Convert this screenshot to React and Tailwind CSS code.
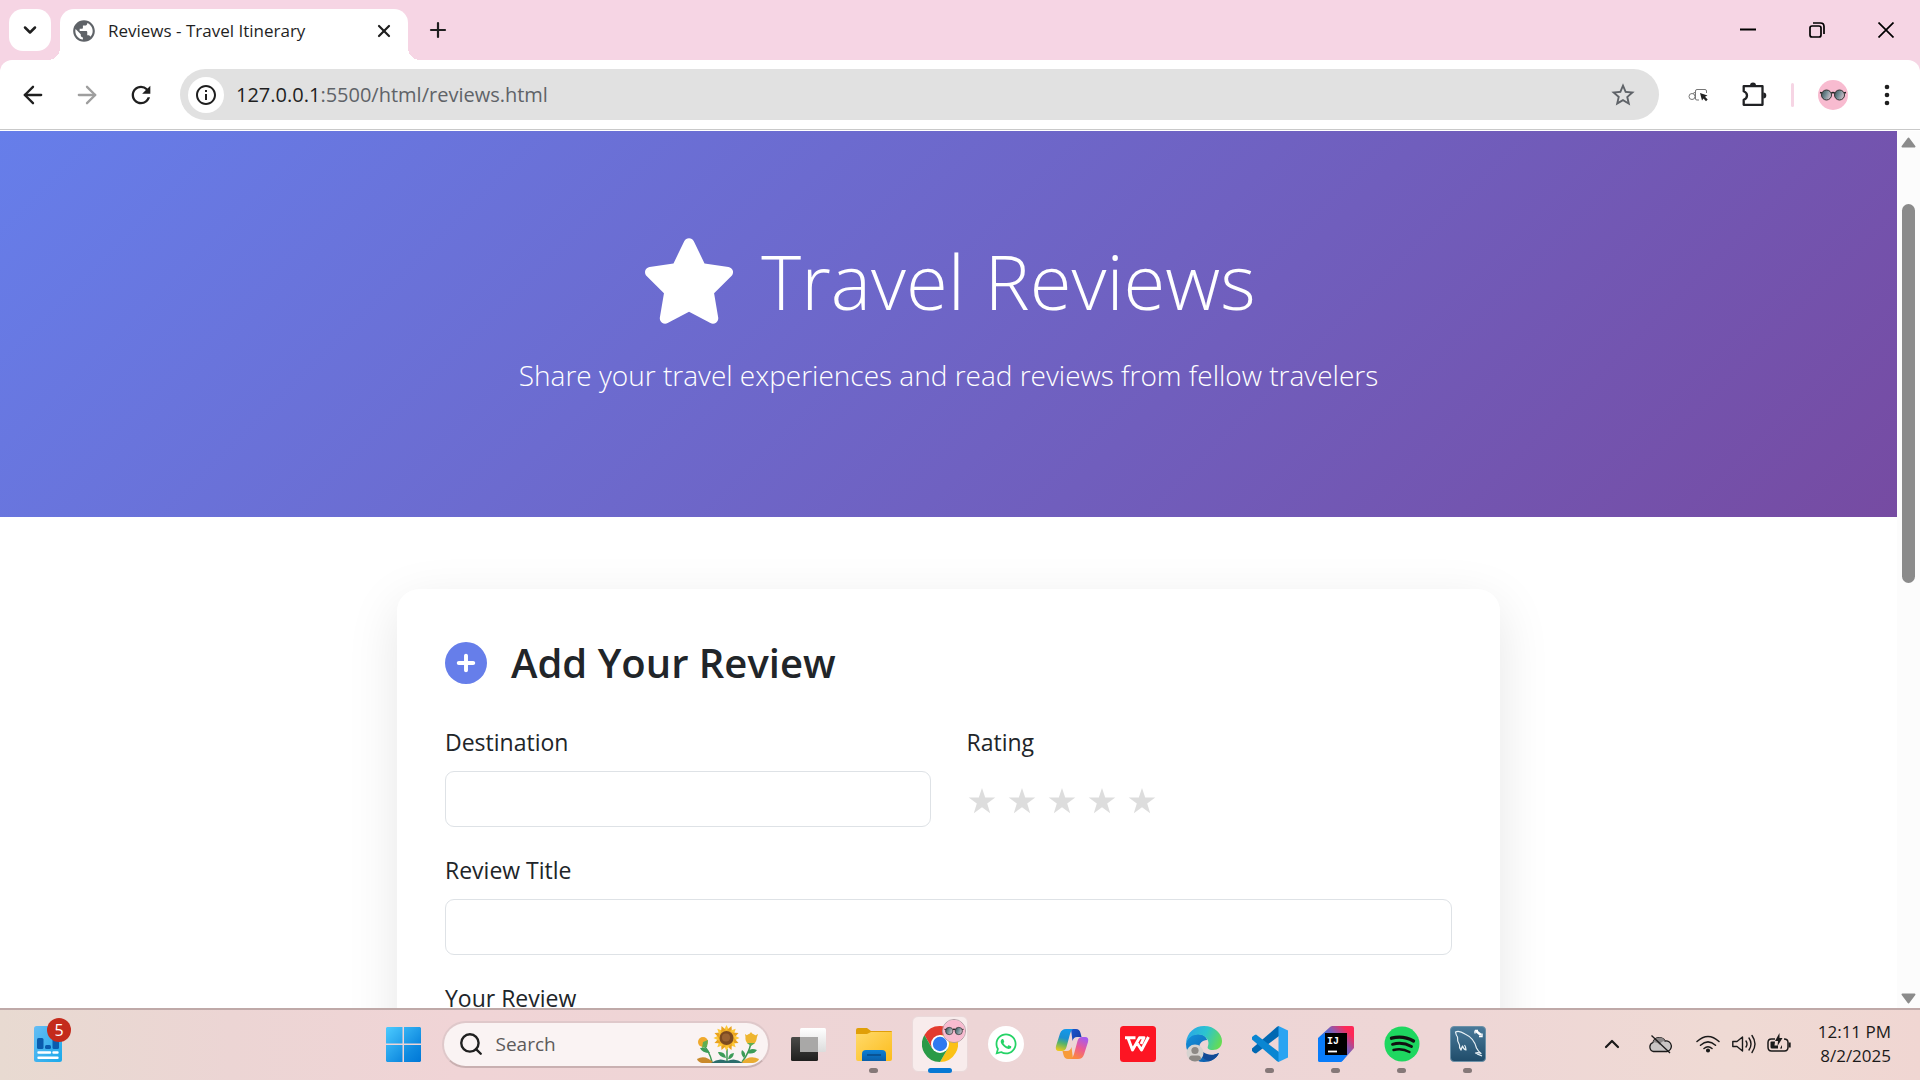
import React from "react";
import { ArrowLeft, ArrowRight, ChevronDown, ChevronUp, Plus, X, Search } from "lucide-react";
import { MdRefresh, MdInfoOutline, MdStarBorder, MdPublic } from "react-icons/md";
import { FaStar, FaCirclePlus, FaWhatsapp } from "react-icons/fa6";

function RoundGlasses({ className }) {
  return (
    <svg viewBox="0 0 30 30" className={className} aria-hidden="true">
      <defs>
        <linearGradient id="lens" x1="0" y1="0" x2="1" y2="0.4">
          <stop offset="0" stopColor="#3c4a50" />
          <stop offset="0.5" stopColor="#6f8a92" />
          <stop offset="1" stopColor="#c9bcc6" />
        </linearGradient>
      </defs>
      <circle cx="15" cy="15" r="15" fill="#f8bbd0" />
      <path d="M2 12.5 4 13M28 12.5 26 13M13 13.5Q15 11.5 17 13.5" stroke="#222" strokeWidth="1.5" fill="none" />
      <circle cx="8.5" cy="15" r="5" fill="url(#lens)" stroke="#333" strokeWidth="1" />
      <circle cx="21.5" cy="15" r="5" fill="url(#lens)" stroke="#333" strokeWidth="1" />
    </svg>
  );
}

function TabStrip() {
  return (
    <header className="flex h-[60px] shrink-0 items-stretch bg-[#f6d5e4]">
      <button aria-label="Search tabs" className="ml-[9px] mt-[9px] flex size-[42px] items-center justify-center rounded-[14px] bg-white">
        <ChevronDown className="size-5 text-[#1f1f1f]" strokeWidth={3} />
      </button>
      <div className="relative ml-[9px] mt-[9px] flex w-[348px] items-center rounded-t-[14px] bg-white pb-2 pl-[11px] pr-3">
        <span className="absolute -left-3 bottom-0 size-3 bg-[radial-gradient(circle_at_0_0,#f6d5e4_12px,#fff_12px)]" />
        <span className="absolute -right-3 bottom-0 size-3 bg-[radial-gradient(circle_at_100%_0,#f6d5e4_12px,#fff_12px)]" />
        <MdPublic className="size-[26px] text-[#5f6368]" />
        <span className="ml-[11px] flex-1 whitespace-nowrap text-[17px] leading-6 text-[#1f1f1f]">Reviews - Travel Itinerary</span>
        <button aria-label="Close tab" className="flex size-6 items-center justify-center">
          <X className="size-5 text-[#1f1f1f]" strokeWidth={2.6} />
        </button>
      </div>
      <button aria-label="New tab" className="ml-[18px] flex w-6 items-center justify-center">
        <Plus className="size-6 text-[#1f1f1f]" strokeWidth={2.2} />
      </button>
      <div className="ml-auto flex">
        <button aria-label="Minimize" className="flex w-[69px] items-center justify-center">
          <svg viewBox="0 0 16 16" className="size-4"><path d="M0 7.5H16" stroke="#000" strokeWidth="2" /></svg>
        </button>
        <button aria-label="Restore" className="flex w-[69px] items-center justify-center">
          <svg viewBox="0 0 16 16" className="size-4" fill="none" stroke="#000" strokeWidth="1.7">
            <rect x="1" y="4" width="11" height="11" rx="2" />
            <path d="M4 1H11.5Q15 1 15 4.500V12" />
          </svg>
        </button>
        <button aria-label="Close window" className="flex w-[69px] items-center justify-center">
          <svg viewBox="0 0 16 16" className="size-4"><path d="M.5.5 15.500 15.500M15.500.5.5 15.500" stroke="#000" strokeWidth="1.700" /></svg>
        </button>
      </div>
    </header>
  );
}

function Toolbar() {
  const nav = "flex size-[42px] items-center justify-center";
  return (
    <div className="shrink-0 bg-[#f6d5e4]">
      <nav className="flex h-[70px] items-center rounded-t-xl border-b border-[#c9c9c9] bg-white px-3 text-[#1f1f1f]">
        <div className="flex gap-3">
          <button aria-label="Back" className={nav}><ArrowLeft className="size-7" /></button>
          <button aria-label="Forward" className={nav}><ArrowRight className="size-7 text-[#9e9e9e]" /></button>
          <button aria-label="Reload" className={nav}><MdRefresh className="size-7" /></button>
        </div>
        <div className="ml-[18px] flex h-[51px] flex-1 items-center rounded-full bg-[#e1e1e1] pl-2 pr-[22px]">
          <button aria-label="Site information" className="flex size-9 items-center justify-center rounded-full bg-white">
            <MdInfoOutline className="size-6" />
          </button>
          <a href="#reviews" className="ml-3 flex-1 text-xl text-[#5f6368]">
            <span className="text-[#1f1f1f]">127.0.0.1</span>:5500/html/reviews.html
          </a>
          <button aria-label="Bookmark this tab"><MdStarBorder className="size-7 text-[#5f6368]" /></button>
        </div>
        <button aria-label="Element picker" className="ml-[18px] flex size-[42px] items-center justify-center">
          <svg viewBox="0 0 20 14" className="h-[14px] w-5" fill="none" stroke="#777" strokeWidth="1">
            <circle cx="4" cy="8.500" r="3" />
            <path d="M5 5.500 7.500 4M7.500 2.500V11Q7.500 12 9 12H11M7.500 3Q7.500 1.500 9 1.500H17Q18.500 1.500 18.500 3V5" />
            <path d="M12 5 19.500 7.500 17 8.700 19.700 11.500 18 13.200 15.500 10.500 14 12.500Z" fill="#222" stroke="none" />
          </svg>
        </button>
        <button aria-label="Extensions" className="ml-[14px] flex size-[42px] items-center justify-center">
          <svg viewBox="0 0 25 25" className="size-[25px]">
            <path d="M2.500 4.200H20.500V22.800H1.700V17.800Q5 16.500 5 13.500T1.700 9.200V4.200Z" fill="none" stroke="#202124" strokeWidth="2.300" strokeLinejoin="round" />
            <path d="M8 3.500a3 3 0 0 1 6 0ZM21.300 10.500a3 3 0 0 1 0 6Z" fill="#202124" />
          </svg>
        </button>
        <span className="ml-4 h-6 w-[3px] rounded-full bg-[#f6d5e4]" />
        <button aria-label="Profile" className="ml-[18px] flex size-[42px] items-center justify-center">
          <RoundGlasses className="size-[30px]" />
        </button>
        <button aria-label="Menu" className="ml-3 flex size-[42px] items-center justify-center">
          <svg viewBox="0 0 6 22" className="h-[22px] w-[6px]" fill="#1f1f1f">
            <circle cx="3" cy="3" r="2.300" /><circle cx="3" cy="11" r="2.300" /><circle cx="3" cy="19" r="2.300" />
          </svg>
        </button>
      </nav>
    </div>
  );
}

const field = "h-14 w-full rounded-[9px] border border-[#dee2e6] bg-white px-4 text-2xl";
const label = "mb-[10px] block text-[23px] leading-[38px] text-[#212529]";

function ReviewPage() {
  return (
    <div className="flex-1 overflow-hidden bg-white">
      <section className="flex flex-col items-center bg-[linear-gradient(135deg,#667eea_0%,#764ba2_100%)] pb-[119px] pt-[100px] text-white">
        <h1 className="flex items-center gap-6 text-[76px] font-light leading-[100px]">
          <FaStar className="size-24" />
          Travel Reviews
        </h1>
        <p className="mt-[22px] text-[28px] font-light leading-[45px]">
          Share your travel experiences and read reviews from fellow travelers
        </p>
      </section>
      <form className="mx-auto mt-[72px] w-full max-w-[1103px] rounded-[22px] bg-white p-12 shadow-[0_15px_52px_rgba(0,0,0,0.1)]">
        <h2 className="mb-[34px] flex items-center gap-6 text-[40px] font-semibold leading-[52px] text-[#212529]">
          <FaCirclePlus className="size-[42px] text-[#667eea]" />
          Add Your Review
        </h2>
        <div className="grid grid-cols-2 gap-x-9">
          <div className="mb-6">
            <label htmlFor="destination" className={label}>Destination</label>
            <input id="destination" type="text" className={field} />
          </div>
          <fieldset>
            <legend className={label}>Rating</legend>
            <div className="flex h-14 items-center gap-[10px] pt-1">
              {[1, 2, 3, 4, 5].map((n) => (
                <label key={n} className="relative block w-[30px]">
                  <input type="radio" name="rating" value={n} aria-label={`${n} stars`} className="absolute inset-0 size-full cursor-pointer opacity-0" />
                  <svg viewBox="0 0 30 30" className="size-[30px]" fill="#ddd" aria-hidden="true">
                    <path d="M15 2 18.200 11.600H28.300L20.200 17.600 23.200 27.200 15 21.300 6.800 27.200 9.800 17.600 1.700 11.600H11.800Z" />
                  </svg>
                </label>
              ))}
            </div>
          </fieldset>
        </div>
        <div className="mb-6">
          <label htmlFor="title" className={label}>Review Title</label>
          <input id="title" type="text" className={field} />
        </div>
        <div>
          <label htmlFor="review" className={label}>Your Review</label>
          <textarea id="review" rows={4} className="w-full rounded-[9px] border border-[#dee2e6] p-4 text-2xl" />
        </div>
      </form>
    </div>
  );
}

function Scrollbar() {
  return (
    <div className="flex w-[23px] shrink-0 flex-col items-center bg-[#fcfcfc] pb-1 pt-[6px]">
      <svg viewBox="0 0 15 11" className="h-[11px] w-[15px]"><path d="M7.500 1.500 13.500 9.500H1.500Z" fill="#8b8b8b" stroke="#8b8b8b" strokeWidth="2" strokeLinejoin="round" /></svg>
      <div className="flex w-[13px] flex-1 flex-col pt-14">
        <div className="h-[48%] rounded-full bg-[#8b8b8b]" />
      </div>
      <svg viewBox="0 0 15 11" className="h-[11px] w-[15px]"><path d="M7.500 9.500 13.500 1.500H1.500Z" fill="#8b8b8b" stroke="#8b8b8b" strokeWidth="2" strokeLinejoin="round" /></svg>
    </div>
  );
}

const icon = "size-9";

function TaskViewIcon() {
  return (
    <svg viewBox="0 0 36 36" className={icon}>
      <defs>
        <linearGradient id="tvd" x1="0" y1="0" x2="0" y2="1"><stop offset="0" stopColor="#4a4a48" /><stop offset="1" stopColor="#1f1f1e" /></linearGradient>
        <linearGradient id="tvl" x1="0" y1="0" x2="0" y2="1"><stop offset="0" stopColor="#fff" /><stop offset="1" stopColor="#dcdcdc" /></linearGradient>
      </defs>
      <rect x="1" y="11" width="27" height="24" rx="1.500" fill="url(#tvd)" />
      <rect x="10" y="2" width="26" height="24" rx="1.500" fill="url(#tvl)" />
      <rect x="10" y="11" width="18" height="15" fill="#a9a8a7" />
    </svg>
  );
}

function FolderIcon() {
  return (
    <svg viewBox="0 0 36 36" className={icon}>
      <defs>
        <linearGradient id="fo" x1="0" y1="0" x2="1" y2="1"><stop offset="0" stopColor="#ffda6b" /><stop offset="1" stopColor="#fcbc1c" /></linearGradient>
        <linearGradient id="fb" x1="0" y1="0" x2="0" y2="1"><stop offset="0" stopColor="#0c7fd6" /><stop offset="1" stopColor="#0b5fa8" /></linearGradient>
      </defs>
      <path d="M0 4Q0 2 2 2H11L15 5H35Q36 5 36 6V12H0Z" fill="#e09f08" />
      <path d="M0 8H11L15 6H36V33Q36 35 34 35H2Q0 35 0 33Z" fill="url(#fo)" />
      <path d="M6 35V28Q6 24 10 24H26Q30 24 30 28V35Z" fill="url(#fb)" />
      <path d="M11 29H25" stroke="#084a86" strokeWidth="1.500" />
    </svg>
  );
}

function ChromeIcon() {
  return (
    <svg viewBox="0 0 36 36" className={icon}>
      <path d="M2.410 9A18 18 0 0 1 33.590 9H18L10.200 22.500Z" fill="#e33b2e" />
      <path d="M33.590 9A18 18 0 0 1 18 36L25.790 22.500 18 9Z" fill="#fbc116" />
      <path d="M18 36A18 18 0 0 1 2.410 9L10.200 22.500H25.790Z" fill="#2a9a47" />
      <circle cx="18" cy="18" r="9" fill="#fff" />
      <circle cx="18" cy="18" r="7.200" fill="#2f7af0" />
    </svg>
  );
}

function WhatsAppIcon() {
  return (
    <span className="flex size-9 items-center justify-center rounded-full bg-white">
      <FaWhatsapp className="size-6 text-[#25d366]" />
    </span>
  );
}

function CopilotIcon() {
  return (
    <svg viewBox="0 0 36 36" className={icon}>
      <defs>
        <linearGradient id="cpa" x1="0.5" y1="0" x2="0.300" y2="1"><stop offset="0" stopColor="#1398ea" /><stop offset="0.400" stopColor="#1c8fd0" /><stop offset="0.650" stopColor="#56b36a" /><stop offset="1" stopColor="#ecc81c" /></linearGradient>
        <linearGradient id="cpb" x1="0.700" y1="0" x2="0.300" y2="1"><stop offset="0" stopColor="#a45bf0" /><stop offset="0.500" stopColor="#ec5a93" /><stop offset="1" stopColor="#fc8a3c" /></linearGradient>
        <linearGradient id="cpc" x1="0" y1="0" x2="1" y2="0.500"><stop offset="0" stopColor="#1a55d0" /><stop offset="1" stopColor="#1741a8" /></linearGradient>
      </defs>
      <path d="M17 3H22Q25.500 3 26.500 7L27.500 11H23Q19.500 11 18.500 15Z" fill="url(#cpc)" />
      <path d="M19 33H14Q10.500 33 9.500 29L8.500 25H13Q16.500 25 17.500 21Z" fill="#f79a3a" />
      <path d="M12 3H19Q17 4 16 8L12.500 21Q11.500 25 8 25H5Q.8 25 2 20L6 7.500Q7.500 3 12 3Z" fill="url(#cpa)" />
      <path d="M24 33H17Q19 32 20 28L23.500 15Q24.500 11 28 11H31Q35.200 11 34 16L30 28.500Q28.500 33 24 33Z" fill="url(#cpb)" />
    </svg>
  );
}

function WpsIcon() {
  return (
    <svg viewBox="0 0 36 36" className={icon}>
      <rect width="36" height="36" rx="3.500" fill="#fd1523" />
      <path d="M5 11.700H15.500M8 12 12.500 24 19.500 11.700H24L21 18M17 17 21.500 24 28.500 11" fill="none" stroke="#fff" strokeWidth="2.900" strokeLinejoin="round" />
    </svg>
  );
}

function EdgeIcon() {
  return (
    <svg viewBox="0 0 36 36" className={icon}>
      <defs>
        <linearGradient id="ea" x1="0" y1="0.300" x2="1" y2="0.600"><stop offset="0" stopColor="#2aa6e8" /><stop offset="0.500" stopColor="#2cc4cf" /><stop offset="1" stopColor="#66dc52" /></linearGradient>
        <linearGradient id="eb" x1="0" y1="0" x2="1" y2="1"><stop offset="0" stopColor="#1593dc" /><stop offset="1" stopColor="#0c53a4" /></linearGradient>
      </defs>
      <path d="M0 18C1 11 6 8 12 8C18 8 21 12 21 14C16 14 13 18 13 22C13 29 20 33 33 27C30 33 25 36 18 36C8 36 0 28 0 18Z" fill="url(#eb)" />
      <path d="M13 19C11 27 18 36 25 34.500C29 33 32 30 33 27C24 31 15 28 13 19Z" fill="#124a96" />
      <path d="M0 17C1 6 9 0 18 0C29 0 36 8 36 15C36 21 32 24 27 24C22 24 21 22 22 20C24 15 20 8.500 12 8.500C6 8.500 2 12 0 17Z" fill="url(#ea)" />
      <circle cx="9" cy="27" r="8.500" fill="#d6d3d0" />
      <circle cx="9" cy="24.500" r="3.600" fill="#8d8985" />
      <path d="M3 33Q3 29.500 6 29.500H12Q15 29.500 15 33Q12 35.500 9 35.500T3 33Z" fill="#8d8985" />
    </svg>
  );
}

function CodeIcon() {
  return (
    <svg viewBox="0 0 36 36" className={icon}>
      <path d="M27 0V10L4 27.500Q2.500 27.500 0 25V22.500L25 .8Z" fill="#0168b2" />
      <path d="M27 36V26L4 8.500Q2.500 8.500 0 11V13.500L25 35.200Z" fill="#0a86d2" />
      <path d="M26.500 0 36 4.500V31.500L26.500 36Z" fill="#2aa4f2" />
    </svg>
  );
}

function IdeaIcon() {
  return (
    <svg viewBox="0 0 36 36" className={icon}>
      <defs>
        <linearGradient id="ij" x1="0.150" y1="0.800" x2="0.950" y2="0.100"><stop offset="0.250" stopColor="#087cfa" /><stop offset="0.600" stopColor="#8a5bb0" /><stop offset="0.900" stopColor="#fe2857" /></linearGradient>
      </defs>
      <path d="M0 12 12 1Q13 0 14.500 0H34Q36 0 36 2V22L24.500 35Q23.500 36 22 36H2Q0 36 0 34Z" fill="url(#ij)" />
      <path d="M0 14 7 8V29H29L23 36H2Q0 36 0 34Z" fill="#087cfa" />
      <rect x="7" y="7" width="22" height="22" fill="#000" />
      <text x="9" y="18" fill="#fff" fontFamily="Liberation Mono, monospace" fontWeight="700" fontSize="10">IJ</text>
      <path d="M10 25.500H19" stroke="#fff" strokeWidth="1.800" />
    </svg>
  );
}

function SpotifyIcon() {
  return (
    <svg viewBox="0 0 36 36" className={icon} fill="none" stroke="#111" strokeLinecap="round">
      <circle cx="18" cy="18" r="17.500" fill="#1ed760" stroke="none" />
      <path d="M7.500 12.200Q19 9 29.500 15" strokeWidth="3.400" />
      <path d="M8.500 18.300Q18.500 15.500 27.500 20.500" strokeWidth="2.900" />
      <path d="M9.500 24Q18 21.800 25.500 26" strokeWidth="2.400" />
    </svg>
  );
}

function WorkbenchIcon() {
  return (
    <svg viewBox="0 0 36 36" className={icon}>
      <defs>
        <linearGradient id="wb" x1="0" y1="0" x2="0" y2="1"><stop offset="0" stopColor="#4a7a9a" /><stop offset="1" stopColor="#1f4c6a" /></linearGradient>
      </defs>
      <rect x="0.500" y="0.500" width="35" height="35" rx="3.500" fill="url(#wb)" stroke="#6d91a8" />
      <path d="M32 30 27 28M32 30 25.500 27Q28 26 31 27.500Q28 25 26.500 22Q24 12 15 8Q9 4 5.500 6Q6 9 7.500 11Q7 15 9.500 19Q9 22 11 24Q12 21 12.500 20Q14 24 16 24Q16 21 14.500 19" fill="none" stroke="#e8f1f6" strokeWidth="1.200" strokeLinejoin="round" />
      <path d="M26 5 31 9" stroke="#fff" strokeWidth="2.500" />
      <path d="M25 4.500 28 4.500M25 4.500V7.500M32 7.500V10.500H29" stroke="#fff" strokeWidth="1.400" fill="none" />
    </svg>
  );
}

const petals = Array.from({ length: 16 }, (_, i) => i * 22.5);

function Sunflowers() {
  return (
    <svg viewBox="0 0 62 38" className="h-[38px] w-[62px] shrink-0" aria-hidden="true">
      <g fill="none" stroke="#3f9a55" strokeWidth="1.500">
        <path d="M6 20Q12 25 15 37M30 24V37M54 18Q52 28 45 37" />
      </g>
      <g fill="#3c9c58">
        <path d="M13 28Q5 28 3 23Q10 22 13 28ZM29 33Q22 32 21 27Q28 26 29 33ZM31 34Q32 28 37 28Q36 34 31 34ZM50 28Q53 22 60 25Q57 30 50 28ZM47 33Q43 29 45 25Q50 28 47 33Z" />
      </g>
      <path d="M0 34Q8 29 17 38H5Q1 37 0 34Z" fill="#c98a2c" />
      <path d="M62 34Q52 29 44 38H56Q61 37 62 34Z" fill="#e9ac32" />
      <path d="M14 38Q22 32 30 36Q38 32 46 38Z" fill="#2c6e6c" />
      <circle cx="6" cy="17" r="5" fill="#f0a92c" /><path d="M6 17 11 15 10 22 5 23Z" fill="#5fae52" />
      <g fill="#eeb52f"><circle cx="54" cy="14" r="5.500" /><path d="M48 9 51 11 54 7 57 11 61 9 59 15H49Z" /></g>
      <path d="M50 18H58L54 21Z" fill="#5fae52" />
      {petals.map((a) => (
        <path key={a} d="M26.500 6 29.500 0 32.500 6Z" fill={a % 45 ? "#e9a21d" : "#fcc838"} transform={`rotate(${a} 29.500 13)`} />
      ))}
      <circle cx="29.500" cy="13" r="8" fill="#f2b127" />
      <circle cx="29.500" cy="13" r="7" fill="#7c4a20" />
      <circle cx="29" cy="12.500" r="4" fill="#9a6231" />
    </svg>
  );
}

const apps = [
  { name: "Task View", Icon: TaskViewIcon },
  { name: "File Explorer", Icon: FolderIcon, running: true },
  { name: "Chrome", Icon: ChromeIcon, active: true },
  { name: "WhatsApp", Icon: WhatsAppIcon },
  { name: "Copilot", Icon: CopilotIcon },
  { name: "WPS Office", Icon: WpsIcon },
  { name: "Edge", Icon: EdgeIcon },
  { name: "Visual Studio Code", Icon: CodeIcon, running: true },
  { name: "IntelliJ IDEA", Icon: IdeaIcon, running: true },
  { name: "Spotify", Icon: SpotifyIcon, running: true },
  { name: "MySQL Workbench", Icon: WorkbenchIcon, running: true },
];

function Taskbar() {
  return (
    <footer className="flex h-[72px] shrink-0 items-stretch border-t-2 border-[#bfa9a8] bg-[linear-gradient(90deg,#e8dad1_0%,#ecd5d4_12%,#f0d4d6_24%,#edd5d6_50%,#eed6d6_75%,#efdad4_90%,#f0d6d2_100%)] pb-[2px]">
      <div className="flex flex-1 items-center pl-[34px]">
        <button aria-label="Widgets" className="relative">
          <svg viewBox="0 0 28 36" className="h-9 w-7">
            <defs><linearGradient id="wg" x1="0" y1="0" x2="1" y2="1"><stop offset="0" stopColor="#66bdf4" /><stop offset="1" stopColor="#1aa9ea" /></linearGradient></defs>
            <rect width="28" height="36" rx="2.500" fill="url(#wg)" />
            <rect x="3" y="12" width="6.500" height="11" rx="1.500" fill="#0a5cae" />
            <rect x="11" y="19" width="6" height="4" rx="1.500" fill="#0a5cae" />
            <rect x="18.500" y="12" width="6.500" height="11" rx="1.500" fill="#0a5cae" />
            <path d="M4.500 26.500H16M19.500 26.500H23.500M4.500 31.700H23.500" stroke="#fff" strokeWidth="2.400" strokeLinecap="round" />
          </svg>
          <span className="absolute -right-[9px] -top-2 flex size-6 items-center justify-center rounded-full bg-[#c42b1c] text-base leading-6 text-white">5</span>
        </button>
      </div>
      <div className="mr-[54px] flex items-stretch">
        <button aria-label="Start" className="flex w-[66px] items-center justify-center">
          <svg viewBox="0 0 35 35" className="size-[35px]">
            <defs><linearGradient id="wn" x1="0" y1="0" x2="35" y2="35" gradientUnits="userSpaceOnUse"><stop offset="0" stopColor="#4ccbff" /><stop offset="0.700" stopColor="#0f8ae0" /><stop offset="1" stopColor="#0077d6" /></linearGradient></defs>
            <path d="M1 0H16.500V16.500H0V1ZM18 0H34L35 1V16.500H18ZM0 18H16.500V35H1L0 34ZM18 18H35V34L34 35H18Z" fill="url(#wn)" />
          </svg>
        </button>
        <label className="mx-[5px] flex h-[47px] w-[328px] items-center self-center rounded-full border-2 border-b-[#c9b0b1] border-[#dfc8ca] bg-[#faf3f3] pl-[14px] pr-[9px]">
          <Search className="size-[26px] shrink-0 text-[#1f1f1f]" strokeWidth={2.200} />
          <input type="search" placeholder="Search" aria-label="Search" className="ml-3 min-w-0 flex-1 bg-transparent text-[19px] leading-7 outline-none placeholder:text-[#5d5a5a]" />
          <Sunflowers />
        </label>
        {apps.map(({ name, Icon, running, active }) => (
          <button key={name} aria-label={name} className="relative flex w-[66px] items-center justify-center">
            {active && <span className="absolute inset-x-[5px] inset-y-[6px] rounded-md border border-[#ead9da] bg-[#f8ecec]" />}
            <span className="relative"><Icon /></span>
            {active && (
              <span className="absolute right-[7px] top-[9px] rounded-full border border-[#b09aa2]">
                <RoundGlasses className="size-[22px]" />
              </span>
            )}
            {active && <span className="absolute bottom-[5px] h-[5px] w-6 rounded-full bg-[#0678d4]" />}
            {running && <span className="absolute bottom-[5px] h-[5px] w-[9px] rounded-full bg-[#857878]" />}
          </button>
        ))}
      </div>
      <div className="flex flex-1 items-center justify-end pr-[29px] text-[#1b1a1a]">
        <button aria-label="Show hidden icons" className="mr-6"><ChevronUp className="size-6" strokeWidth={2.200} /></button>
        <svg viewBox="0 0 24 24" className="mr-6 size-6" role="img" aria-label="Cloud offline">
          <path d="M5.500 19.500A4.700 4.700 0 0 1 5 10.500 6.500 6.500 0 0 1 17 9 5.300 5.300 0 0 1 19 19.500Z" fill="#c9c5c4" stroke="#1b1a1a" strokeWidth="1.300" />
          <path d="M5 10.500A6.500 6.500 0 0 1 17 9Q13 9 12 13Q9 9.500 5 10.500Z" fill="#8b8787" />
          <path d="M3.500 3.500 22 21" stroke="#1b1a1a" strokeWidth="1.300" />
        </svg>
        <svg viewBox="0 0 24 24" className="mr-3 size-6" fill="none" stroke="#1b1a1a" strokeWidth="1.500" strokeLinecap="round" role="img" aria-label="Wi-Fi">
          <path d="M1 9.500Q12 -.5 23 9.500M4.500 13.200Q12 6.500 19.500 13.200M8 16.500Q12 13 16 16.500" />
          <circle cx="12" cy="18.500" r="1.300" fill="#1b1a1a" />
        </svg>
        <svg viewBox="0 0 24 24" className="mr-[11px] size-6" fill="none" stroke="#1b1a1a" strokeWidth="1.400" strokeLinecap="round" strokeLinejoin="round" role="img" aria-label="Volume">
          <path d="M.8 9.500V14.500H5L10.500 19V5L5 9.500Z" />
          <path d="M14 9Q16 12 14 15M17 6Q21 12 17 18M20 3.500Q26 12 20 20.500" />
        </svg>
        <svg viewBox="0 0 24 24" className="mr-[27px] size-6" fill="none" stroke="#1b1a1a" strokeWidth="1.500" role="img" aria-label="Battery charging">
          <path d="M8 7H4.500Q1 7 1 10.500V15Q1 19 4.500 19H17.500Q21 19 21 15V10.500Q21 7 17 7" />
          <path d="M22.700 10.500V15.500" strokeWidth="2" />
          <path d="M3.500 10Q3.500 9.500 4.500 9.500H8L7.500 13.500H11V16.500H13L15 13V16.500H5Q3.500 16.500 3.500 15Z" fill="#1b1a1a" stroke="none" />
          <path d="M12.500 1 8 9H11L10.500 14 15.500 6H12.500Z" fill="#1b1a1a" stroke="none" />
        </svg>
        <time className="whitespace-nowrap text-right text-[17px] leading-6">12:11 PM<br />8/2/2025</time>
      </div>
    </footer>
  );
}

export default function App() {
  return (
    <div className="flex h-screen flex-col overflow-hidden bg-white font-['Open_Sans','Noto_Sans',sans-serif]">
      <TabStrip />
      <Toolbar />
      <main className="flex min-h-0 flex-1 pt-px">
        <ReviewPage />
        <Scrollbar />
      </main>
      <Taskbar />
    </div>
  );
}
